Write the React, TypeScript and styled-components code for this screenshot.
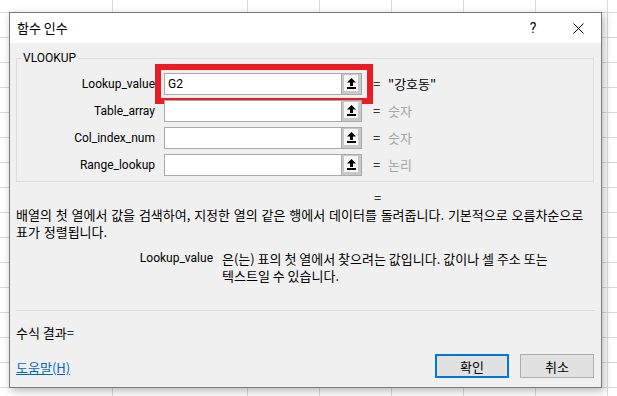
import styled, { createGlobalStyle } from "styled-components";

const GlobalStyle = createGlobalStyle`
  * {
    box-sizing: border-box;
  }
  body {
    margin: 0;
    background: #ffffff;
    font-family: "Noto Sans CJK KR", "Noto Sans", sans-serif;
    font-size: 13px;
    color: #000000;
  }
`;

const COLS = [113, 135, 72, 72, 72, 72, 72, 72];
const ROWS = 17;
const LATIN = `Roboto, "Noto Sans CJK KR", sans-serif`;

const args = [
  { name: "Lookup_value", value: "G2", result: '"강호동"', active: true },
  { name: "Table_array", value: "", result: "숫자" },
  { name: "Col_index_num", value: "", result: "숫자" },
  { name: "Range_lookup", value: "", result: "논리" },
];

function RefArrow() {
  return (
    <svg width="9" height="11" viewBox="0 0 9 11">
      <path d="M4.5 0 L9 4.5 L6 4.5 L6 8 L3 8 L3 4.5 L0 4.5 Z" fill="#000" />
      <rect x="0" y="9" width="9" height="2" fill="#000" />
    </svg>
  );
}

export default function App() {
  return (
    <>
      <GlobalStyle />
      <Sheet>
        {Array.from({ length: ROWS * COLS.length }).map((_, i) => (
          <Cell key={i} />
        ))}

        <Dialog>
          <TitleBar>
            <Title>함수 인수</Title>
            <HelpMark>?</HelpMark>
            <CloseMark>
              <svg width="11" height="11" viewBox="0 0 11 11">
                <path d="M0.5 0.5 L10.5 10.5 M10.5 0.5 L0.5 10.5" stroke="#000" strokeWidth="1" />
              </svg>
            </CloseMark>
          </TitleBar>

          <Body>
            <Group>
              <Legend>VLOOKUP</Legend>
              {args.map((a) => (
                <ArgRow key={a.name}>
                  <ArgLabel>{a.name}</ArgLabel>
                  <Field>
                    <FieldInput>{a.value}</FieldInput>
                    <RefButton>
                      <RefFace>
                        <RefArrow />
                      </RefFace>
                    </RefButton>
                    {a.active && <Highlight />}
                  </Field>
                  <Equals>=</Equals>
                  <ArgResult $hint={!a.active}>{a.result}</ArgResult>
                </ArgRow>
              ))}
            </Group>

            <TotalEquals>=</TotalEquals>
            <Description>
              배열의 첫 열에서 값을 검색하여, 지정한 열의 같은 행에서 데이터를 돌려줍니다. 기본적으로 오름차순으로
              <br />
              표가 정렬됩니다.
            </Description>

            <ArgHelp>
              <ArgHelpName>Lookup_value</ArgHelpName>
              <ArgHelpText>
                은(는) 표의 첫 열에서 찾으려는 값입니다. 값이나 셀 주소 또는
                <br />
                텍스트일 수 있습니다.
              </ArgHelpText>
            </ArgHelp>

            <Divider />
            <FormulaResult>수식 결과=</FormulaResult>

            <Footer>
              <HelpLink href="#">도움말(H)</HelpLink>
              <Buttons>
                <DialogButton $primary>확인</DialogButton>
                <DialogButton>취소</DialogButton>
              </Buttons>
            </Footer>
          </Body>
        </Dialog>
      </Sheet>
    </>
  );
}

const Sheet = styled.div`
  position: relative;
  width: 617px;
  height: 396px;
  overflow: hidden;
  display: grid;
  grid-template-columns: ${COLS.map((c) => `${c}px`).join(" ")};
  grid-template-rows: 13px;
  grid-auto-rows: 25px;
  background: #ffffff;
`;

const Cell = styled.div`
  border-right: 1px solid #d9d9d9;
  border-bottom: 1px solid #d9d9d9;
`;

const Dialog = styled.div`
  position: absolute;
  left: 9px;
  top: 12px;
  width: 593px;
  height: 376px;
  display: flex;
  flex-direction: column;
  border: 1px solid #7a7a7a;
  background: #f0f0f0;
  box-shadow: 2px 3px 8px rgba(0, 0, 0, 0.28);
`;

const TitleBar = styled.div`
  height: 30px;
  flex-shrink: 0;
  display: flex;
  align-items: center;
  background: #ffffff;
  padding-left: 7px;
`;

const Title = styled.div`
  flex: 1;
  line-height: 16px;
  padding-bottom: 1px;
`;

const HelpMark = styled.div`
  width: 10px;
  margin-right: 35px;
  font-family: ${LATIN};
  font-size: 14px;
  line-height: 16px;
  text-align: center;
`;

const CloseMark = styled.div`
  width: 11px;
  height: 11px;
  margin-right: 17px;
  display: flex;
`;

const Body = styled.div`
  flex: 1;
  display: flex;
  flex-direction: column;
  padding: 7px 7px 9px 6px;
`;

const Group = styled.fieldset`
  margin: 0;
  min-width: 0;
  padding: 7px 0 5px 0;
  border: 1px solid #dcdcdc;
  display: flex;
  flex-direction: column;
  gap: 5px;
`;

const Legend = styled.legend`
  margin-left: 4px;
  padding: 0 2px;
  font-family: ${LATIN};
  font-size: 12px;
  line-height: 16px;
`;

const ArgRow = styled.div`
  display: flex;
  align-items: center;
  height: 22px;
`;

const ArgLabel = styled.div`
  width: 138px;
  text-align: right;
  font-family: ${LATIN};
  font-size: 12px;
  line-height: 16px;
`;

const Field = styled.div`
  position: relative;
  margin-left: 9px;
  width: 198px;
  height: 22px;
  display: flex;
`;

const FieldInput = styled.div`
  flex: 1;
  background: #ffffff;
  border: 1px solid #a9a9a9;
  border-right: none;
  padding: 2px 3px;
  font-family: ${LATIN};
  font-size: 12px;
  line-height: 16px;
`;

const RefButton = styled.div`
  width: 21px;
  height: 22px;
  border: 1px solid #a9a9a9;
  background: #c9c9c9;
  padding: 1px 3px 3px 2px;
  display: flex;
`;

const RefFace = styled.div`
  flex: 1;
  background: #f7f7f7;
  display: flex;
  align-items: center;
  justify-content: center;
`;

const Highlight = styled.div`
  position: absolute;
  left: -9px;
  top: -9px;
  width: 218px;
  height: 40px;
  border: 6px solid #ec1c24;
  pointer-events: none;
`;

const Equals = styled.div`
  margin-left: 11px;
  width: 15px;
  line-height: 16px;
`;

const ArgResult = styled.div<{ $hint?: boolean }>`
  color: ${(p) => (p.$hint ? "#a6a6a6" : "#000000")};
  line-height: 16px;
`;

const TotalEquals = styled.div`
  margin-top: 8px;
  padding-left: 358px;
  line-height: 16px;
`;

const Description = styled.div`
  line-height: 17px;
  white-space: nowrap;
  word-spacing: 0.9px;
`;

const ArgHelp = styled.div`
  margin-top: 10px;
  display: flex;
  line-height: 17px;
`;

const ArgHelpName = styled.div`
  width: 198px;
  text-align: right;
  padding-right: 1px;
  font-family: ${LATIN};
  font-size: 12px;
`;

const ArgHelpText = styled.div`
  margin-left: 8px;
  white-space: nowrap;
`;

const Divider = styled.div`
  margin-top: 26px;
  width: 579px;
  height: 1px;
  background: #d9d9d9;
`;

const FormulaResult = styled.div`
  margin-top: 13px;
  line-height: 17px;
`;

const Footer = styled.div`
  margin-top: auto;
  display: flex;
  align-items: center;
  justify-content: space-between;
`;

const HelpLink = styled.a`
  color: #0066cc;
  text-decoration: underline;
  line-height: 16px;
  margin-top: 3px;
`;

const Buttons = styled.div`
  display: flex;
  gap: 11px;
`;

const DialogButton = styled.button<{ $primary?: boolean }>`
  width: 74px;
  height: 24px;
  padding: 0;
  font-family: inherit;
  font-size: 13px;
  color: #000000;
  background: #e1e1e1;
  border: ${(p) => (p.$primary ? "2px solid #0078d7" : "1px solid #adadad")};
`;
